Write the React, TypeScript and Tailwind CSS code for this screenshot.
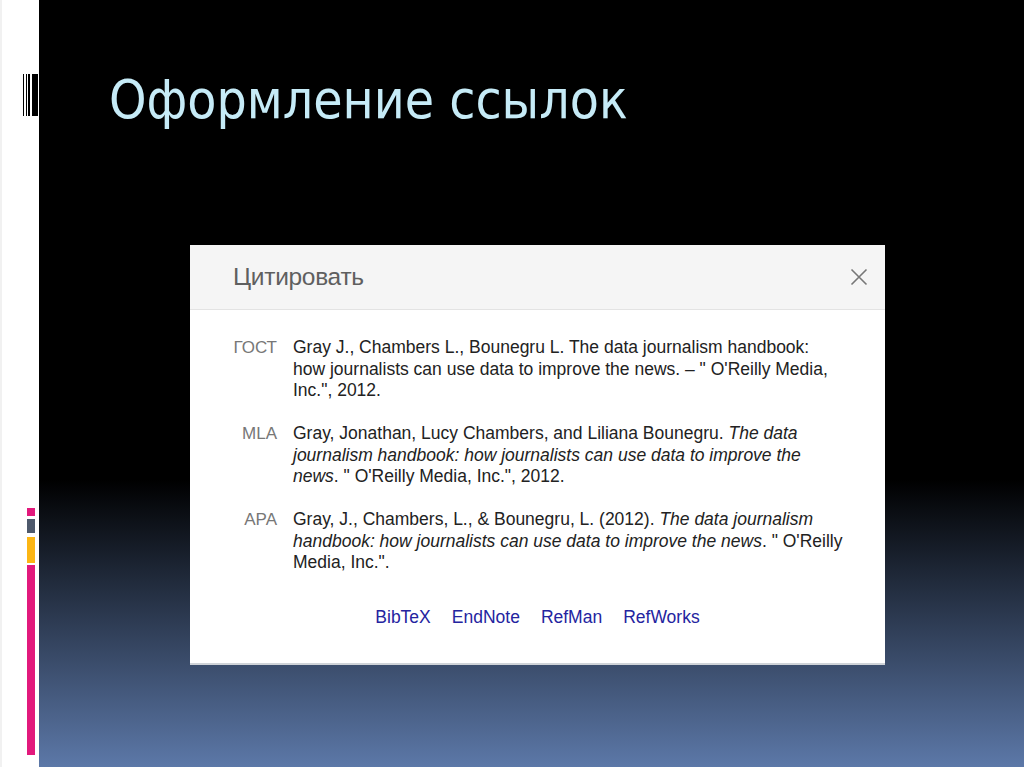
import React from "react"

type Citation = {
  label: string;
  lines: React.ReactNode[];
}

const citations: Citation[] = [
  {
    label: "ГОСТ",
    lines: [
      "Gray J., Chambers L., Bounegru L. The data journalism handbook:",
      "how journalists can use data to improve the news. – \" O'Reilly Media,",
      "Inc.\", 2012.",
    ],
  },
  {
    label: "MLA",
    lines: [
      <>Gray, Jonathan, Lucy Chambers, and Liliana Bounegru. <i>The data</i></>,
      <i>journalism handbook: how journalists can use data to improve the</i>,
      <><i>news</i>. " O'Reilly Media, Inc.", 2012.</>,
    ],
  },
  {
    label: "APA",
    lines: [
      <>Gray, J., Chambers, L., &amp; Bounegru, L. (2012). <i>The data journalism</i></>,
      <><i>handbook: how journalists can use data to improve the news</i>. " O'Reilly</>,
      "Media, Inc.\".",
    ],
  },
]

const links = ["BibTeX", "EndNote", "RefMan", "RefWorks"]

const SideStrip = () => {
  return (
    <div className="w-[39px] shrink-0 bg-white border-l-2 border-[#f1f1f1] flex flex-col">
      {/* barcode-like stripes */}
      <div className="flex h-[42px] mt-[74px] pl-[21px]">
        <div className="w-px bg-black" />
        <div className="w-px bg-black ml-[2px]" />
        <div className="w-[2px] bg-black ml-px" />
        <div className="w-[6px] bg-black ml-[2px]" />
      </div>
      {/* coloured blocks */}
      <div className="flex flex-col ml-[25px] mt-[392px] w-[8px]">
        <div className="h-[8px] bg-[#e2197c]" />
        <div className="h-[14px] mt-[3px] bg-[#4e596c]" />
        <div className="h-[26px] mt-[4px] bg-[#fcb614]" />
        <div className="h-[190px] mt-[2px] bg-[#e2197c]" />
      </div>
    </div>
  )
}

const CiteDialog = () => {
  return (
    <div className="ml-[151px] mt-[119px] w-[695px] h-[420px] bg-white border-b-2 border-[#cfd3d8] font-['Liberation_Sans',Arial,sans-serif] flex flex-col">
      <div className="h-[65px] shrink-0 bg-[#f5f5f5] border-b border-[#e3e3e3] flex items-center justify-between pl-[43px] pr-[17px]">
        <div className="text-[24.5px] text-[#5f5f5f] tracking-[-0.3px]">Цитировать</div>
        <svg width="18" height="18" viewBox="0 0 18 18" fill="none" stroke="#777" strokeWidth={1.6}>
          <path d="M1.5 1.5 16.5 16.5M16.5 1.5 1.5 16.5" />
        </svg>
      </div>
      <div className="pt-[27px] flex flex-col gap-[21.5px]">
        {citations.map((c) => {
          return (
            <div key={c.label} className="flex items-baseline">
              <div className="w-[87px] shrink-0 text-right text-[17px] leading-[21.5px] text-[#777]">{c.label}</div>
              <div className="ml-[16px] text-[17.5px] leading-[21.5px] text-[#222] whitespace-nowrap">
                {c.lines.map((l, idx) => (
                  <div key={idx}>{l}</div>
                ))}
              </div>
            </div>
          )
        })}
      </div>
      <div className="mt-[33px] flex justify-center gap-[21px] text-[17.5px] leading-[21.5px] text-[#2424a0]">
        {links.map((l) => (
          <span key={l}>{l}</span>
        ))}
      </div>
    </div>
  )
}

export default function App() {
  return (
    <div className="w-full h-[767px] flex overflow-hidden">
      <SideStrip />
      <div className="flex-1 flex flex-col bg-[linear-gradient(to_bottom,#000_0%,#000_62.5%,#5c78a8_100%)]">
        <div className="pl-[70px] mt-[73px] text-[53px] leading-none text-[#c6ebf7] font-['DejaVu_Sans_Condensed','DejaVu_Sans',sans-serif]">
          Оформление ссылок
        </div>
        <CiteDialog />
      </div>
    </div>
  )
}
